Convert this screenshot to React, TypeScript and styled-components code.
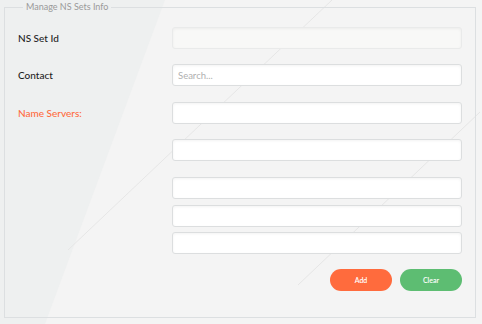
import React from "react";
import styled, { createGlobalStyle } from "styled-components";

const Global = createGlobalStyle`
  html, body { margin: 0; padding: 0; background: #f4f4f4; }
  body { font-family: Lato, "Open Sans", sans-serif; width: 482px; height: 324px; overflow: hidden; }
`;

const Page = styled.div`
  position: relative;
  width: 482px;
  height: 324px;
  padding-top: 1px;
  box-sizing: border-box;
`;

const Backdrop = styled.svg`
  position: absolute;
  left: 0;
  top: 0;
  width: 482px;
  height: 324px;
  z-index: 0;
`;

const Frame = styled.fieldset`
  position: relative;
  z-index: 1;
  margin: 1px 6px 0 4px;
  padding: 15px 13px 0 13px;
  border: 1px solid #dcdfe1;
  height: 316px;
  box-sizing: border-box;
  min-width: 0;
`;

const Legend = styled.legend`
  font-size: 9px;
  line-height: 10px;
  color: #9a9a9a;
  padding: 0 3px;
  margin-left: 5px;
`;

const Row = styled.div<{ $top: number }>`
  display: grid;
  grid-template-columns: 154px 290px;
  align-items: center;
  margin-top: ${(p) => p.$top}px;
`;

const Label = styled.label<{ $accent?: boolean }>`
  font-size: 10px;
  font-weight: 500;
  color: ${(p) => (p.$accent ? "#ff6b3d" : "#1e1e1e")};
`;

const Field = styled.input<{ $disabled?: boolean }>`
  grid-column: 2;
  height: 22px;
  box-sizing: border-box;
  border: 1px solid ${(p) => (p.$disabled ? "#e9eaea" : "#dcdedf")};
  border-radius: 3px;
  background: ${(p) => (p.$disabled ? "#f8f8f7" : "#ffffff")};
  box-shadow: inset 0 1px 3px rgba(0, 0, 0, 0.05);
  padding: 0 5px;
  font-family: inherit;
  font-size: 9.5px;
  color: #333;
  outline: none;
  &::placeholder { color: #b0b0b0; }
`;

const Actions = styled.div`
  display: flex;
  justify-content: flex-end;
  gap: 8px;
  margin-top: 15px;
`;

const Pill = styled.button<{ $color: string }>`
  width: 62px;
  height: 22px;
  border: none;
  border-radius: 11px;
  background: ${(p) => p.$color};
  color: #fff;
  font-family: inherit;
  font-size: 7px;
  font-weight: 600;
  cursor: pointer;
`;

export default function App() {
  return (
    <>
      <Global />
      <Page>
        <Backdrop viewBox="0 0 482 324">
          <polygon points="0,0 165,0 45,324 0,324" fill="#eef0f0" />
          <line x1="332" y1="0" x2="68" y2="250" stroke="#e6e6e6" strokeWidth="1" />
          <line x1="480" y1="112" x2="298" y2="285" stroke="#e6e6e6" strokeWidth="1" />
        </Backdrop>
        <Frame>
          <Legend>Manage NS Sets Info</Legend>
          <Row $top={0}>
            <Label>NS Set Id</Label>
            <Field $disabled readOnly />
          </Row>
          <Row $top={15}>
            <Label>Contact</Label>
            <Field placeholder="Search..." />
          </Row>
          <Row $top={16}>
            <Label $accent>Name Servers:</Label>
            <Field />
          </Row>
          <Row $top={15}>
            <Field />
          </Row>
          <Row $top={16}>
            <Field />
          </Row>
          <Row $top={6}>
            <Field />
          </Row>
          <Row $top={5}>
            <Field />
          </Row>
          <Actions>
            <Pill $color="#ff6b3d">Add</Pill>
            <Pill $color="#5dbd72">Clear</Pill>
          </Actions>
        </Frame>
      </Page>
    </>
  );
}
